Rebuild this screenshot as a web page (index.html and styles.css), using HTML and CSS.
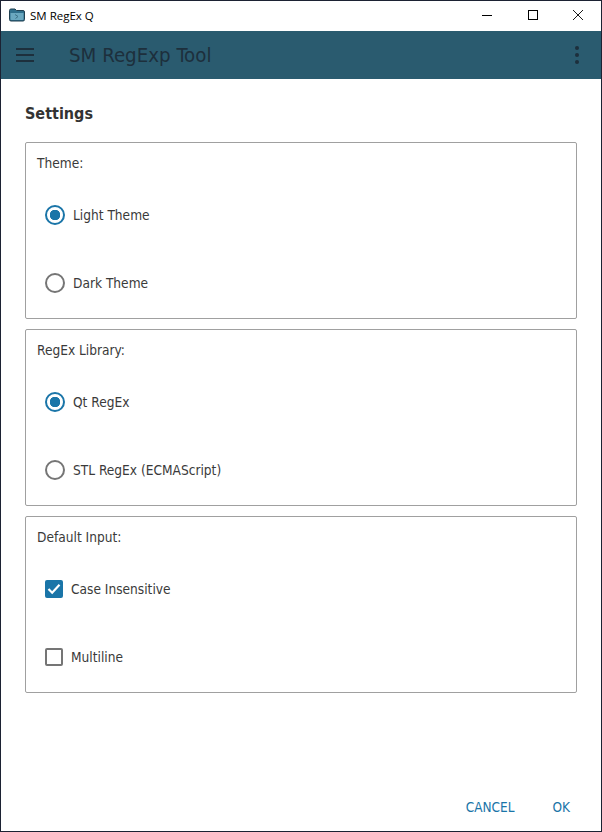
FILE: index.html
```html
<!DOCTYPE html>
<html lang="en">
<head>
<meta charset="utf-8">
<title>SM RegEx Q</title>
<link rel="stylesheet" href="styles.css">
</head>
<body>
<div class="window">
  <div class="titlebar">
    <svg class="app-icon" width="16" height="14" viewBox="0 0 16 14"><path d="M0.5 2.5Q0.5 1 2 1H6L7.5 2.5H14Q15.5 2.5 15.5 4V11.5Q15.5 13 14 13H2Q0.5 13 0.5 11.5Z" fill="#2f6f8c" stroke="#1f3f50"/><path d="M1.5 5H14.5V11Q14.5 12 13.5 12H2.5Q1.5 12 1.5 11Z" fill="#6aa8c0"/><path d="M6 6.5L9 8.5L6.5 10.5" fill="none" stroke="#3b7086"/></svg>
    <span class="app-name">SM RegEx Q</span>
    <div class="win-controls">
      <span class="win-btn"><svg width="10" height="10" viewBox="0 0 10 10"><path d="M0 5.5H10" stroke="#000"/></svg></span>
      <span class="win-btn"><svg width="10" height="10" viewBox="0 0 10 10"><rect x="0.5" y="0.5" width="9" height="9" fill="none" stroke="#000"/></svg></span>
      <span class="win-btn"><svg width="10" height="10" viewBox="0 0 10 10"><path d="M0 0L10 10M10 0L0 10" stroke="#000" stroke-width="0.9"/></svg></span>
    </div>
  </div>
  <header class="appbar">
    <svg class="menu-icon" width="18" height="14" viewBox="0 0 18 14"><path d="M0 1H18M0 7H18M0 13H18" stroke="#1d2f3c" stroke-width="2"/></svg>
    <span class="app-title">SM RegExp Tool</span>
    <svg class="more-icon" width="4" height="18" viewBox="0 0 4 18"><circle cx="2" cy="2" r="2" fill="#1d2f3c"/><circle cx="2" cy="9" r="2" fill="#1d2f3c"/><circle cx="2" cy="16" r="2" fill="#1d2f3c"/></svg>
  </header>
  <main class="content">
    <h1 class="heading">Settings</h1>
    <section class="group">
      <div class="group-label">Theme:</div>
      <div class="option first"><span class="radio checked"></span><span>Light Theme</span></div>
      <div class="option"><span class="radio"></span><span>Dark Theme</span></div>
    </section>
    <section class="group">
      <div class="group-label">RegEx Library:</div>
      <div class="option first"><span class="radio checked"></span><span>Qt RegEx</span></div>
      <div class="option"><span class="radio"></span><span>STL RegEx (ECMAScript)</span></div>
    </section>
    <section class="group">
      <div class="group-label">Default Input:</div>
      <div class="option first"><span class="check checked"><svg width="14" height="12" viewBox="0 0 14 12"><path d="M1.5 6L5.2 9.7L12.5 1.8" fill="none" stroke="#fff" stroke-width="2.2"/></svg></span><span>Case Insensitive</span></div>
      <div class="option"><span class="check"></span><span>Multiline</span></div>
    </section>
  </main>
  <footer class="actions">
    <span class="action">CANCEL</span>
    <span class="action">OK</span>
  </footer>
</div>
</body>
</html>
```
FILE: styles.css
```css
html, body { margin: 0; padding: 0; background: #fff; }
body { font-family: "DejaVu Sans", sans-serif; font-stretch: condensed; color: #3a3a3a; }
.window {
  width: 602px; height: 832px; box-sizing: border-box;
  display: flex; flex-direction: column;
  border: 1px solid #1c2233;
  background: #fff;
}
.titlebar { height: 30px; box-sizing: border-box; padding: 0 0 2px 8px; display: flex; align-items: center; background: #fff; flex: none; }
.app-icon { margin-right: 5px; }
.app-name { font: 11.5px "Open Sans", sans-serif; color: #000; }
.win-controls { margin-left: auto; display: flex; }
.win-btn { width: 45.5px; height: 28px; display: flex; align-items: center; justify-content: center; }
.appbar { height: 48px; flex: none; background: #2a5b6f; display: flex; align-items: center; padding: 0 22px 0 15px; }
.app-title { font-size: 20.3px; font-stretch: condensed; color: #1d2f3c; margin-left: 35px; }
.more-icon { margin-left: auto; }
.content { padding: 0 24px; flex: 1; }
.heading { font-size: 16px; font-weight: 700; margin: 26px 0 19px; line-height: 18px; color: #333; }
.group { height: 177px; box-sizing: border-box; border: 1px solid #a0a0a0; border-radius: 2px; margin-bottom: 10px; padding: 12px 11px; font-size: 13.6px; }
.group-label { line-height: 16px; }
.option { display: flex; align-items: center; gap: 8px; height: 24px; margin-top: 44px; padding-left: 8px; }
.option.first { margin-top: 32px; }
.radio { width: 20px; height: 20px; box-sizing: border-box; border: 2px solid #757575; border-radius: 50%; flex: none; }
.radio.checked { border-color: #1a75a8; background: radial-gradient(circle, #1a75a8 0 5px, transparent 5.5px); }
.check { width: 18px; height: 18px; box-sizing: border-box; border: 2px solid #757575; border-radius: 2px; flex: none; display: flex; align-items: center; justify-content: center; }
.check.checked { border-color: #1a75a8; background: #1a75a8; }
.actions { display: flex; justify-content: flex-end; gap: 38px; padding: 0 31px 16px 0; font-size: 13.5px; color: #1a75a8; }
```
